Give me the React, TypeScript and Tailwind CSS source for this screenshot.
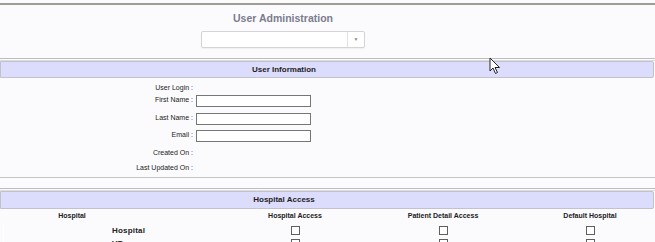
import React from "react";

const labelFont = "font-['Liberation_Sans',Arial,sans-serif]";

function Checkbox() {
  return <div className="w-[9px] h-[9px] border border-[#5f5f5f] bg-white" />;
}

function SectionBar({ title, tall }: { title: string; tall?: boolean }) {
  return (
    <div>
      <div className="h-px bg-[#bdbdbd]" />
      <div className="h-px" />
      <div className="h-px bg-[#dcdcdc]" />
      <div
        className={`${tall ? "h-[18px]" : "h-[17px]"} bg-[#dcdcfc] border border-[#c2c2cc] rounded-r-[2px] mr-px flex items-center`}
      >
        <div className="w-[566px] text-center text-[8px] font-bold text-[#1e1e1e]">
          {title}
        </div>
      </div>
    </div>
  );
}

function FormRow({
  label,
  input,
  className,
}: {
  label: string;
  input?: boolean;
  className: string;
}) {
  return (
    <div className={`flex items-center ${className}`}>
      <div className="w-[194px] text-right text-[7px] text-[#222] pr-px">
        {label} :
      </div>
      {input && (
        <div className="ml-[2px] w-[115px] h-[12px] border border-[#767676] bg-white" />
      )}
    </div>
  );
}

export default function App() {
  const rows = ["Hospital", "VT"];

  return (
    <div
      className={`relative w-[655px] h-[242px] overflow-hidden bg-[#fbfbfd] ${labelFont}`}
    >
      {/* top border */}
      <div className="h-[3px]" />
      <div className="h-[2px] bg-[#9e9e94]" />

      {/* title + select */}
      <div className="w-[566px] flex flex-col items-center">
        <div className="mt-[6px] h-[14px] text-[10.5px] font-bold text-[#7b7b8e] leading-[14px]">
          User Administration
        </div>
        <div className="mt-[6px] w-[164px] h-[17px] border border-[#d4d4d4] rounded-[2px] bg-white flex justify-end shadow-[0_1px_1px_rgba(0,0,0,0.05)]">
          <div className="w-[17px] border-l border-[#e2e2e2] flex items-center justify-center text-[5px] text-[#888]">
            ▼
          </div>
        </div>
      </div>

      <div className="mt-[10px]">
        <SectionBar title="User Information" />
      </div>

      {/* user info form */}
      <div className="pt-[4px]">
        <FormRow label="User Login" className="h-[12px]" />
        <FormRow label="First Name" input className="h-[13px]" />
        <FormRow label="Last Name" input className="mt-[5px] h-[13px]" />
        <FormRow label="Email" input className="mt-[4px] h-[13px]" />
        <FormRow label="Created On" className="mt-[5px] h-[12px]" />
        <FormRow label="Last Updated On" className="mt-[3px] h-[12px]" />
      </div>
      <div className="mt-[3px] h-px bg-[#c4c4c4]" />

      <div className="mt-[10px]">
        <SectionBar title="Hospital Access" tall />
      </div>

      {/* hospital access table */}
      <div className="grid grid-cols-[221px_148px_148px_146px] h-[12px] mt-[1px] items-center text-[7px] font-bold text-[#222]">
        <div className="pr-[77px] text-center">Hospital</div>
        <div className="text-center">Hospital Access</div>
        <div className="text-center">Patient Detail Access</div>
        <div className="text-center">Default Hospital</div>
      </div>
      {rows.map((name, i) => (
        <div
          key={name}
          className={`grid grid-cols-[221px_148px_148px_146px] h-[13px] items-center ${
            i === 0 ? "mt-[2px]" : ""
          }`}
        >
          <div className="pl-[108px] text-[8px] font-bold text-[#222] border-l border-white ml-[3px] tracking-[0.2px]">
            {name}
          </div>
          <div className="flex justify-center">
            <Checkbox />
          </div>
          <div className="flex justify-center">
            <Checkbox />
          </div>
          <div className="flex justify-center">
            <Checkbox />
          </div>
        </div>
      ))}

      {/* mouse pointer */}
      <svg
        className="absolute left-[489px] top-[57px]"
        width="12"
        height="18"
        viewBox="0 0 12 18"
      >
        <path
          d="M1 1 L1 14 L4 11 L6.5 16.5 L8.5 15.5 L6 10.5 L10.5 10.5 Z"
          fill="#fff"
          stroke="#222"
          strokeWidth="1"
          strokeLinejoin="round"
        />
      </svg>
    </div>
  );
}
